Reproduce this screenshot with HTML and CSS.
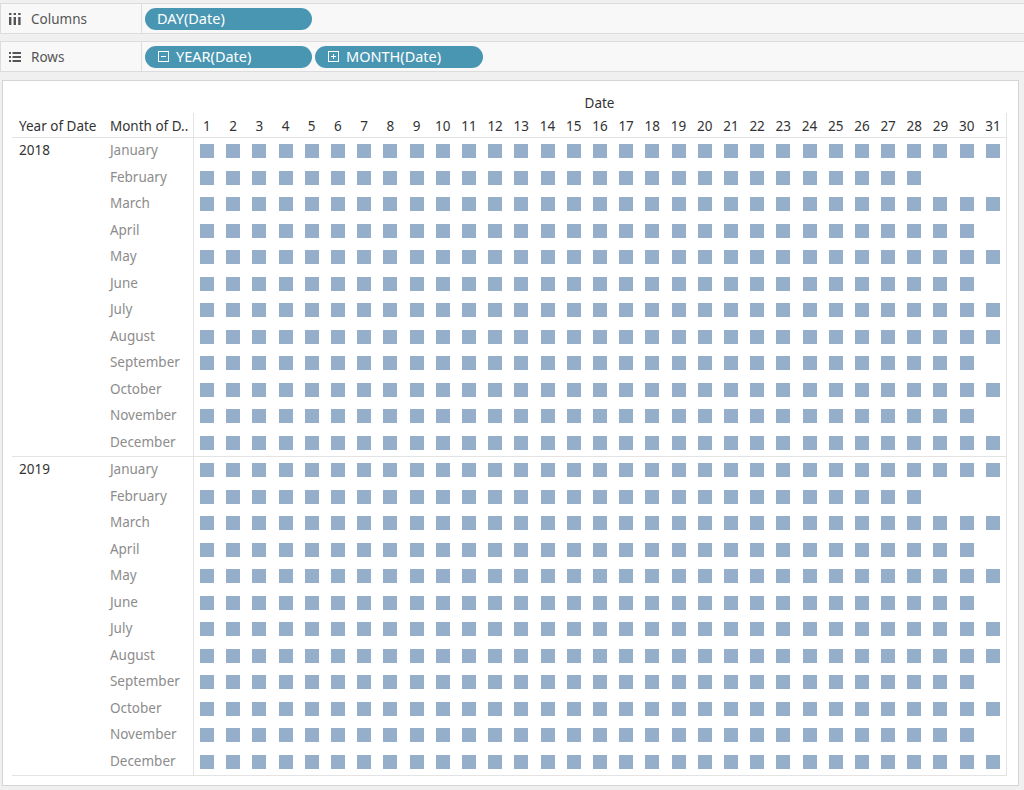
FILE: index.html
```html
<!DOCTYPE html>
<html>
<head>
<meta charset="utf-8">
<link rel="stylesheet" href="styles.css">
</head>
<body>
<div class="shelf shelf-cols">
  <div class="shelf-label">
    <svg class="shelf-icon" width="12" height="12" viewBox="0 0 12 12">
      <rect x="0" y="0" width="2.4" height="2" fill="#555"/>
      <rect x="4.6" y="0" width="2.4" height="2" fill="#555"/>
      <rect x="9.2" y="0" width="2.4" height="2" fill="#555"/>
      <rect x="0" y="4" width="2.4" height="8" fill="#555"/>
      <rect x="4.6" y="4" width="2.4" height="8" fill="#555"/>
      <rect x="9.2" y="4" width="2.4" height="8" fill="#555"/>
    </svg>
    <span>Columns</span>
  </div>
  <div class="shelf-pills">
    <div class="pill"><span>DAY(Date)</span></div>
  </div>
</div>
<div class="shelf shelf-rows">
  <div class="shelf-label">
    <svg class="shelf-icon" width="12" height="10" viewBox="0 0 12 10">
      <rect x="0" y="0" width="2" height="2" fill="#555"/>
      <rect x="3.5" y="0" width="8.5" height="2" fill="#555"/>
      <rect x="0" y="4" width="2" height="2" fill="#555"/>
      <rect x="3.5" y="4" width="8.5" height="2" fill="#555"/>
      <rect x="0" y="8" width="2" height="2" fill="#555"/>
      <rect x="3.5" y="8" width="8.5" height="2" fill="#555"/>
    </svg>
    <span>Rows</span>
  </div>
  <div class="shelf-pills">
    <div class="pill pill-icon">
      <svg width="11" height="11" viewBox="0 0 11 11"><rect x="0.5" y="0.5" width="10" height="10" fill="none" stroke="#fff" stroke-width="1"/><rect x="3" y="5" width="5" height="1" fill="#fff"/></svg>
      <span>YEAR(Date)</span>
    </div>
    <div class="pill pill-icon">
      <svg width="11" height="11" viewBox="0 0 11 11"><rect x="0.5" y="0.5" width="10" height="10" fill="none" stroke="#fff" stroke-width="1"/><rect x="3" y="5" width="5" height="1" fill="#fff"/><rect x="5" y="3" width="1" height="5" fill="#fff"/></svg>
      <span>MONTH(Date)</span>
    </div>
  </div>
</div>
<div class="panel">
  <div class="table">
    <div class="date-title">Date</div>
    <div class="header-row">
      <div class="h-year">Year of Date</div>
      <div class="h-month">Month of D..</div>
      <div class="h-days" id="hdays"></div>
    </div>
    <div class="year-block" data-year="2018">
      <div class="year-cell">2018</div>
      <div class="months"></div>
      <div class="marks"></div>
    </div>
    <div class="year-block" data-year="2019">
      <div class="year-cell">2019</div>
      <div class="months"></div>
      <div class="marks"></div>
    </div>
  </div>
</div>
<script src="script.js"></script>
</body>
</html>
```
FILE: script.js
```js
(function () {
  var names = ["January","February","March","April","May","June","July","August","September","October","November","December"];
  var hdays = document.getElementById("hdays");
  for (var d = 1; d <= 31; d++) {
    var s = document.createElement("div");
    s.className = "hday";
    s.textContent = d;
    hdays.appendChild(s);
  }
  var blocks = document.querySelectorAll(".year-block");
  blocks.forEach(function (b) {
    var y = parseInt(b.getAttribute("data-year"), 10);
    var months = b.querySelector(".months");
    var marks = b.querySelector(".marks");
    for (var m = 0; m < 12; m++) {
      var n = document.createElement("div");
      n.className = "month";
      n.textContent = names[m];
      months.appendChild(n);
      var row = document.createElement("div");
      row.className = "mark-row";
      var days = new Date(y, m + 1, 0).getDate();
      for (var k = 1; k <= 31; k++) {
        var c = document.createElement("div");
        c.className = "cell";
        if (k <= days) {
          var sq = document.createElement("i");
          sq.className = "sq";
          c.appendChild(sq);
        }
        row.appendChild(c);
      }
      marks.appendChild(row);
    }
  });
})();
```
FILE: styles.css
```css
html, body {
  margin: 0;
  padding: 0;
}
body {
  background: #f0f0f0;
  font-family: "Noto Sans", "Open Sans", sans-serif;
  font-size: 13px;
  color: #333;
  width: 1024px;
  height: 790px;
  overflow: hidden;
}
.shelf {
  display: flex;
  height: 29px;
  background: #f8f8f8;
  border-top: 1px solid #dcdcdc;
  border-bottom: 1px solid #dcdcdc;
  border-left: 1px solid #dcdcdc;
}
.shelf-cols { margin-top: 3px; }
.shelf-rows { margin-top: 7px; }
.shelf-label {
  width: 141px;
  border-right: 1px solid #dcdcdc;
  display: flex;
  align-items: center;
  color: #555;
  padding-left: 8px;
  box-sizing: border-box;
  font-size: 13.5px;
}
.shelf-icon { margin-right: 10px; flex: none; }
.shelf-pills {
  display: flex;
  align-items: center;
  gap: 3px;
  padding-left: 3px;
}
.pill {
  width: 167px;
  height: 22px;
  border-radius: 11px;
  background: #4996b2;
  color: #fff;
  display: flex;
  align-items: center;
  padding-left: 12px;
  padding-bottom: 1px;
  box-sizing: border-box;
  font-size: 14.5px;
}
.pill-icon { padding-left: 13px; }
.pill-icon svg { margin-right: 7px; flex: none; margin-top: 1px; }
.pill-icon + .pill-icon { width: 168px; }
.panel {
  margin: 8px 0 0 2px;
  width: 1017px;
  height: 706px;
  background: #fff;
  border: 1px solid #d4d4d4;
  box-sizing: border-box;
  padding: 11px 0 0 9px;
}
.table { width: 995px; }
.date-title {
  margin-left: 181px;
  width: 813px;
  height: 21px;
  line-height: 23px;
  text-align: center;
  color: #333;
  font-size: 13.5px;
}
.header-row {
  display: flex;
  height: 24px;
  border-bottom: 1px solid #e3e3e3;
  font-size: 13.5px;
}
.h-year, .h-month {
  line-height: 26px;
  padding-left: 7px;
  box-sizing: border-box;
  white-space: nowrap;
  color: #333;
}
.h-year { width: 91px; }
.h-month { width: 90px; }
.h-days, .marks {
  width: 815px;
  border-left: 1px solid #e3e3e3;
  border-right: 1px solid #e3e3e3;
  box-sizing: border-box;
}
.h-days {
  display: grid;
  grid-template-columns: repeat(31, 1fr);
}
.hday {
  text-align: center;
  line-height: 26px;
  color: #333;
}
.year-block {
  display: flex;
  border-bottom: 1px solid #e3e3e3;
  font-size: 13.5px;
}
.year-cell {
  width: 91px;
  padding-left: 7px;
  box-sizing: border-box;
  line-height: 25px;
  color: #333;
}
.months { width: 90px; }
.month {
  height: 26.5px;
  line-height: 25.6px;
  padding-left: 7px;
  color: #8c8c8c;
}
.mark-row {
  display: grid;
  grid-template-columns: repeat(31, 1fr);
  height: 26.5px;
}
.cell {
  display: flex;
  align-items: center;
  justify-content: center;
}
.sq {
  display: block;
  width: 14px;
  height: 14px;
  background: #95afcb;
}
```
